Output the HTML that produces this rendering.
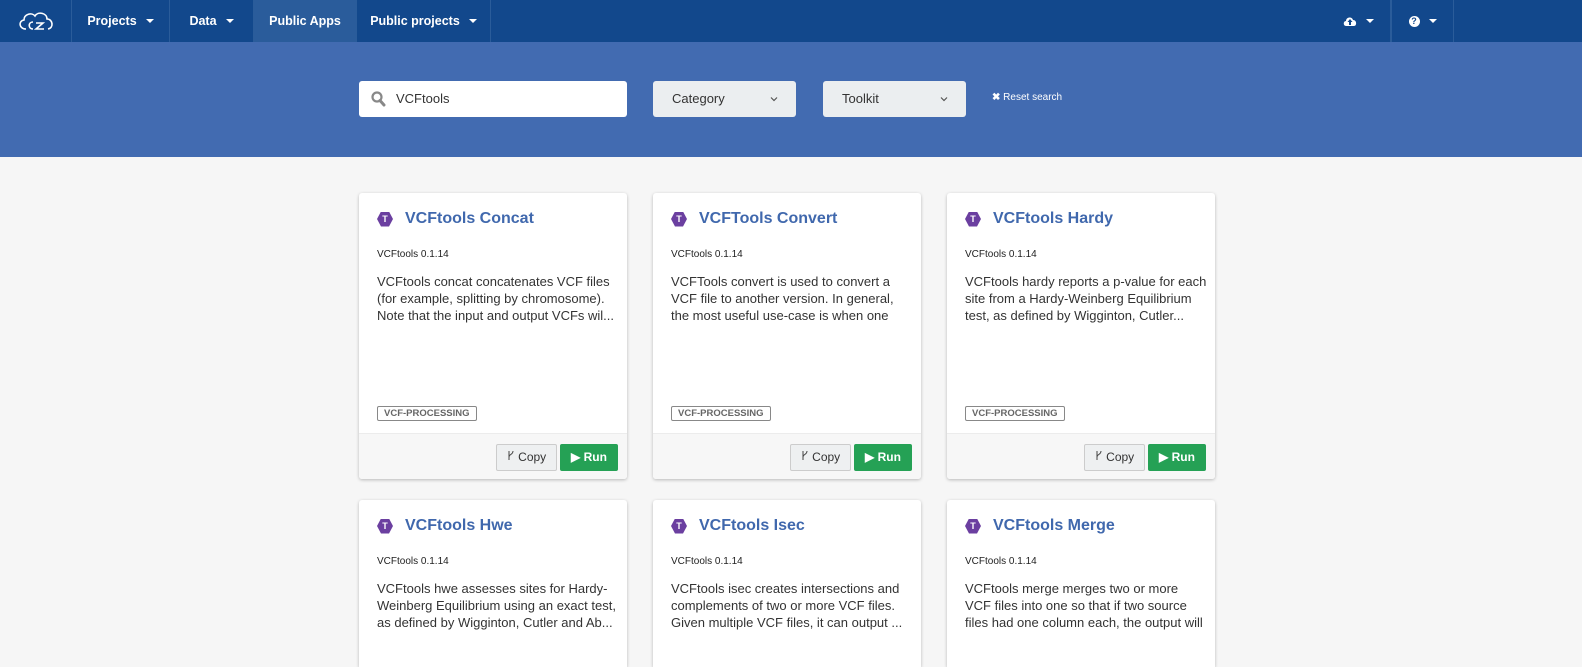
<!DOCTYPE html>
<html><head><meta charset="utf-8"><style>
*{box-sizing:border-box;margin:0;padding:0}
html,body{width:1582px;height:667px;overflow:hidden}
body{background:#f6f6f6;font-family:"Liberation Sans",Arial,sans-serif;position:relative}
.nav{height:42px;background:#12488c;position:relative;display:flex}
.nav .it{height:42px;color:#fff;font-size:12.5px;font-weight:bold;display:flex;align-items:center;justify-content:center;border-right:1px solid #2a5c9a}
.caret{display:inline-block;width:0;height:0;border-left:4px solid transparent;border-right:4px solid transparent;border-top:4px solid #fff;margin-left:9px}
.banner{position:absolute;top:42px;left:0;width:1582px;height:115px;background:#426bb1}
.search{position:absolute;left:359px;top:81px;width:268px;height:36px;background:#fff;border-radius:3px;font-size:13px;color:#333;padding-left:37px;line-height:36px}
.sel{position:absolute;top:81px;width:143px;height:36px;background:#ebeef0;border-radius:3px;font-size:13px;color:#333;line-height:36px;padding-left:19px}
.sel svg{position:absolute;right:18px;top:15px}
.reset{position:absolute;left:992px;top:92px;color:#fff;font-size:10px}
.card{position:absolute;width:268px;height:286px;background:#fff;border-radius:3px;box-shadow:0 1px 3px rgba(0,0,0,.25);overflow:hidden}
.card.s{height:167px;border-radius:3px 3px 0 0}
.card h3{position:absolute;left:18px;top:17px;font-size:16px;color:#4068ad;font-weight:bold;display:flex;align-items:center}
.hex{width:16px;height:15px;background:#6b3fa0;clip-path:polygon(25% 0,75% 0,100% 50%,75% 100%,25% 100%,0 50%);color:#fff;font-size:9px;display:flex;align-items:center;justify-content:center;margin-right:12px}
.ver{position:absolute;left:18px;top:56px;font-size:10px;color:#222}
.desc{position:absolute;left:18px;top:80px;white-space:nowrap;font-size:13px;line-height:17px;color:#333}
.tag{position:absolute;left:18px;top:213px;border:1px solid #888;border-radius:2px;font-size:9.5px;font-weight:bold;color:#666;padding:1px 6px;line-height:11px}
.foot{position:absolute;left:0;top:240px;width:100%;height:46px;background:#f7f7f7;border-top:1px solid #ececec}
.copy{position:absolute;left:137px;top:10px;width:61px;height:27px;border:1px solid #ccc;background:#eef0f1;border-radius:2px;font-size:12px;color:#333;line-height:25px;text-align:center}
.run{position:absolute;left:201px;top:10px;width:58px;height:27px;background:#25a155;border-radius:2px;font-size:12px;color:#fff;font-weight:bold;line-height:27px;text-align:center}
</style></head><body>
<div class="nav">
<div class="it" style="width:72px"><svg width="40" height="22" viewBox="0 0 40 22" fill="none" stroke="#fff" stroke-width="1.6"><path d="M10 19 C3 19 2 11 8 10 C8 4 16 2 19 6 C22 1 31 3 31 9 C37 9 38 18 32 19"/><path d="M17 12 C12 12 12 19 17 19 M20 13 H27 L20 19 H28"/></svg></div>
<div class="it" style="width:98px">Projects<span class="caret"></span></div>
<div class="it" style="width:84px">Data<span class="caret"></span></div>
<div class="it" style="width:103px;background:#2a5c9b">Public Apps</div>
<div class="it" style="width:134px">Public projects<span class="caret"></span></div>
<div class="it" style="position:absolute;left:1327px;width:64px;border-left:none"><svg width="14" height="11" viewBox="0 0 14 11"><path d="M3 10 C0 10 0 5 3 5 C3 1 9 0 10 4 C14 4 14 10 11 10Z" fill="#fff"/><path d="M7 3 L4.5 6 H6 V9 H8 V6 H9.5Z" fill="#12488c"/></svg><span class="caret"></span></div>
<div class="it" style="position:absolute;left:1391px;width:63px;border-left:1px solid #2a5c9a"><span style="display:inline-block;width:11px;height:11px;border-radius:50%;background:#fff;color:#12488c;font-size:9px;line-height:11px;text-align:center">?</span><span class="caret"></span></div>
</div>
<div class="banner"></div>
<div class="search"><svg style="position:absolute;left:12px;top:10px" width="15" height="16" viewBox="0 0 15 16"><circle cx="6" cy="6" r="4.5" fill="none" stroke="#888" stroke-width="2.2"/><path d="M9 9.5 L13 14" stroke="#888" stroke-width="3" stroke-linecap="round"/></svg>VCFtools</div>
<div class="sel" style="left:653px">Category<svg width="8" height="6" viewBox="0 0 8 6"><path d="M1 1.5 L4 4.5 L7 1.5" fill="none" stroke="#555" stroke-width="1.2"/></svg></div>
<div class="sel" style="left:823px">Toolkit<svg width="8" height="6" viewBox="0 0 8 6"><path d="M1 1.5 L4 4.5 L7 1.5" fill="none" stroke="#555" stroke-width="1.2"/></svg></div>
<div class="reset"><b>✖</b> Reset search</div>

<div class="card" style="left:359px;top:193px"><h3><span class="hex">T</span>VCFtools Concat</h3><div class="ver">VCFtools 0.1.14</div><div class="desc">VCFtools concat concatenates VCF files<br>(for example, splitting by chromosome).<br>Note that the input and output VCFs wil...</div><div class="tag">VCF-PROCESSING</div><div class="foot"><div class="copy"><svg width="8" height="11" viewBox="0 0 8 11" fill="none" stroke="#444" stroke-width="1"><path d="M2 1 V10 M2 7 C2 4 6 5 6 1"/></svg> Copy</div><div class="run">▶ Run</div></div></div>
<div class="card" style="left:653px;top:193px"><h3><span class="hex">T</span>VCFTools Convert</h3><div class="ver">VCFtools 0.1.14</div><div class="desc">VCFTools convert is used to convert a<br>VCF file to another version. In general,<br>the most useful use-case is when one</div><div class="tag">VCF-PROCESSING</div><div class="foot"><div class="copy"><svg width="8" height="11" viewBox="0 0 8 11" fill="none" stroke="#444" stroke-width="1"><path d="M2 1 V10 M2 7 C2 4 6 5 6 1"/></svg> Copy</div><div class="run">▶ Run</div></div></div>
<div class="card" style="left:947px;top:193px"><h3><span class="hex">T</span>VCFtools Hardy</h3><div class="ver">VCFtools 0.1.14</div><div class="desc">VCFtools hardy reports a p-value for each<br>site from a Hardy-Weinberg Equilibrium<br>test, as defined by Wigginton, Cutler...</div><div class="tag">VCF-PROCESSING</div><div class="foot"><div class="copy"><svg width="8" height="11" viewBox="0 0 8 11" fill="none" stroke="#444" stroke-width="1"><path d="M2 1 V10 M2 7 C2 4 6 5 6 1"/></svg> Copy</div><div class="run">▶ Run</div></div></div>

<div class="card s" style="left:359px;top:500px"><h3><span class="hex">T</span>VCFtools Hwe</h3><div class="ver">VCFtools 0.1.14</div><div class="desc">VCFtools hwe assesses sites for Hardy-<br>Weinberg Equilibrium using an exact test,<br>as defined by Wigginton, Cutler and Ab...</div></div>
<div class="card s" style="left:653px;top:500px"><h3><span class="hex">T</span>VCFtools Isec</h3><div class="ver">VCFtools 0.1.14</div><div class="desc">VCFtools isec creates intersections and<br>complements of two or more VCF files.<br>Given multiple VCF files, it can output ...</div></div>
<div class="card s" style="left:947px;top:500px"><h3><span class="hex">T</span>VCFtools Merge</h3><div class="ver">VCFtools 0.1.14</div><div class="desc">VCFtools merge merges two or more<br>VCF files into one so that if two source<br>files had one column each, the output will</div></div>
</body></html>
